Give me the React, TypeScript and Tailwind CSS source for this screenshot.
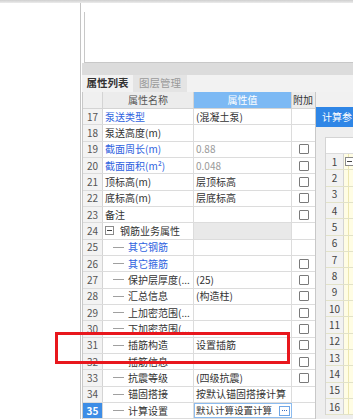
import { Fragment } from 'react'

type Row = {
  n: number
  name: string
  value?: string
  blue?: boolean
  gray?: boolean
  cb?: boolean
  kind?: 'group' | 'child'
}

const rows: Row[] = [
  { n: 17, name: '泵送类型', value: '(混凝土泵)', blue: true },
  { n: 18, name: '泵送高度(m)' },
  { n: 19, name: '截面周长(m)', value: '0.88', blue: true, gray: true, cb: true },
  { n: 20, name: '截面面积(m²)', value: '0.048', blue: true, gray: true, cb: true },
  { n: 21, name: '顶标高(m)', value: '层顶标高', cb: true },
  { n: 22, name: '底标高(m)', value: '层底标高', cb: true },
  { n: 23, name: '备注', cb: true },
  { n: 24, name: '钢筋业务属性', kind: 'group' },
  { n: 25, name: '其它钢筋', blue: true, kind: 'child' },
  { n: 26, name: '其它箍筋', blue: true, kind: 'child', cb: true },
  { n: 27, name: '保护层厚度(...', value: '(25)', kind: 'child', cb: true },
  { n: 28, name: '汇总信息', value: '(构造柱)', kind: 'child', cb: true },
  { n: 29, name: '上加密范围(...', kind: 'child', cb: true },
  { n: 30, name: '下加密范围(...', kind: 'child', cb: true },
  { n: 31, name: '插筋构造', value: '设置插筋', kind: 'child', cb: true },
  { n: 32, name: '插筋信息', kind: 'child', cb: true },
  { n: 33, name: '抗震等级', value: '(四级抗震)', kind: 'child', cb: true },
  { n: 34, name: '锚固搭接', value: '按默认锚固搭接计算', kind: 'child' },
  { n: 35, name: '计算设置', value: '默认计算设置计算', kind: 'child' },
]

const Checkbox = () => (
  <div className="w-[10px] h-[10px] border border-[#7a7a7a] rounded-[1px] bg-white"></div>
)

const PropertyTable = () => {
  return (
    <div className="w-[233px] border-l border-[#c8c8c8] bg-white">
      <div className="grid grid-cols-[20px_91px_98px_24px] h-[17px] border-b border-[#d4d4d4]">
        <div className="bg-[#f0f0f0] border-r border-[#d4d4d4]"></div>
        <div className="bg-[#ececec] border-r border-[#d4d4d4] flex items-center justify-center text-[#555]">
          属性名称
        </div>
        <div className="bg-[#7cb9f4] border-r border-[#d4d4d4] flex items-center justify-center text-white">
          属性值
        </div>
        <div className="bg-[#ececec] flex items-center pl-[1px] text-[#333]">附加</div>
      </div>
      {rows.map((r) => {
        const last = r.n === 35
        return (
          <div
            key={r.n}
            className="grid grid-cols-[20px_91px_98px_24px] h-[16.33px] border-b border-[#dcdcdc]"
          >
            <div
              className={
                last
                  ? 'bg-[#3d8de6] text-white font-bold flex items-center justify-center border-r border-[#d4d4d4]'
                  : 'bg-[#f3f3f3] text-[#555] flex items-center justify-center border-r border-[#d4d4d4]'
              }
            >
              {r.n}
            </div>
            <div className="flex items-center border-r border-[#dcdcdc] overflow-hidden whitespace-nowrap">
              {r.kind === 'group' && (
                <Fragment>
                  <div className="ml-[2px] w-[9px] h-[9px] border border-[#8a8a8a] bg-white flex items-center justify-center">
                    <div className="w-[5px] h-px bg-[#444]"></div>
                  </div>
                  <span className="ml-[6px] text-[#333]">{r.name}</span>
                </Fragment>
              )}
              {r.kind === 'child' && (
                <Fragment>
                  <div className="ml-[10px] w-[11px] h-px bg-[#a0a0a0]"></div>
                  <span className={r.blue ? 'ml-[4px] text-[#2f63e0]' : 'ml-[4px] text-[#333]'}>
                    {r.name}
                  </span>
                </Fragment>
              )}
              {!r.kind && (
                <span className={r.blue ? 'ml-[2px] text-[#2f63e0]' : 'ml-[2px] text-[#333]'}>
                  {r.name}
                </span>
              )}
            </div>
            <div
              className={
                r.kind === 'group'
                  ? 'bg-[#e9e9e9] border-r border-[#dcdcdc]'
                  : last
                    ? 'flex items-center border border-[#8dbcef] pl-px pr-px whitespace-nowrap'
                    : 'flex items-center border-r border-[#dcdcdc] pl-[2px] whitespace-nowrap overflow-hidden'
              }
            >
              {r.value && (
                <span
                  className={
                    last ? 'text-[9.5px] text-[#333]' : r.gray ? 'text-[#9a9a9a]' : 'text-[#333]'
                  }
                >
                  {r.value}
                </span>
              )}
              {last && (
                <div className="ml-auto shrink-0 w-[11px] h-[10px] border border-[#6fa6e6] bg-white flex items-center justify-center gap-px">
                  <div className="w-px h-px bg-[#3b6fc0]"></div>
                  <div className="w-px h-px bg-[#3b6fc0]"></div>
                  <div className="w-px h-px bg-[#3b6fc0]"></div>
                </div>
              )}
            </div>
            <div className="flex items-center justify-center">{r.cb && <Checkbox />}</div>
          </div>
        )
      })}
    </div>
  )
}

const CalcPanel = () => {
  const nums = Array.from({ length: 16 }, (_, i) => i + 1)
  return (
    <div className="flex-1 border-l border-[#c8c8c8] bg-[#eeeeee] overflow-hidden">
      <div className="h-[15px] bg-[#f1f1f1]"></div>
      <div className="h-[20px] bg-[#2f86e6] text-white flex items-center pl-[6px] whitespace-nowrap overflow-hidden">
        计算参
      </div>
      <div className="h-[10px]"></div>
      <div className="ml-[9px] bg-white border-l border-t border-[#d4d4d4]">
        <div className="h-[16px] border-b border-[#dcdcdc]"></div>
        {nums.map((n) => (
          <div key={n} className="flex h-[16.33px] border-b border-[#e2e2c8]">
            <div className="w-[18px] bg-[#f2f2f2] border-r border-[#d4d4d4] flex items-center justify-center text-[#444]">
              {n}
            </div>
            <div className="flex-1 bg-[#fffde4] flex items-center">
              <div className="w-[5px] h-full border-r border-[#ece6b0]"></div>
              {n === 1 && (
                <div className="-ml-[4px] w-[9px] h-[9px] border border-[#8a8a8a] bg-white flex items-center justify-center">
                  <div className="w-[5px] h-px bg-[#444]"></div>
                </div>
              )}
            </div>
          </div>
        ))}
      </div>
    </div>
  )
}

export default function App() {
  return (
    <div className="relative w-[353px] h-[419px] overflow-hidden bg-white font-['Noto_Sans_CJK_SC','Microsoft_YaHei',sans-serif] text-[10px] leading-none">
      <div className="h-[3px] bg-gradient-to-b from-[#cfcfcf] to-[#ececec]"></div>
      <div className="flex h-[416px]">
        <div className="w-[80px] shrink-0"></div>
        <div className="flex-1 flex flex-col border-l border-[#c4c4c4] pt-[9px] pl-px">
          <div className="ml-[2px] h-[51px] border-l border-b border-[#c8c8c8] bg-white shrink-0"></div>
          <div className="h-[12px] bg-[#dcdcdc] shrink-0"></div>
          <div className="h-[17px] bg-[#f2f2f2] flex shrink-0">
            <div className="w-[51px] flex items-center justify-center font-bold text-[#333] text-[10.5px]">
              属性列表
            </div>
            <div className="w-[54px] bg-[#e4e4e4] flex items-center justify-center text-[#9a9a9a] text-[10.5px]">
              图层管理
            </div>
          </div>
          <div className="flex flex-1 min-h-0">
            <PropertyTable />
            <CalcPanel />
          </div>
        </div>
      </div>
      <div className="absolute left-[55px] top-[332px] w-[235px] h-[32px] border-[3px] border-[#e8171d]"></div>
    </div>
  )
}
